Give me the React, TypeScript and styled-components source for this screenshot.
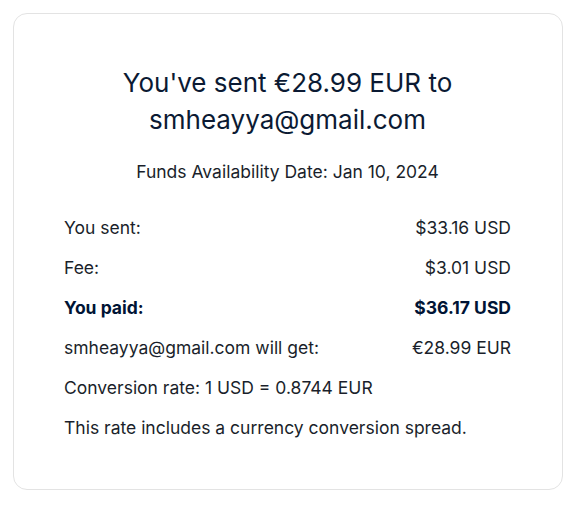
import React from "react";
import styled, { createGlobalStyle } from "styled-components";

const GlobalStyle = createGlobalStyle`
  body {
    margin: 0;
    background: #ffffff;
    font-family: Inter, "Noto Sans", Arial, sans-serif;
    color: #001435;
  }
`;

const Page = styled.div`
  padding: 13px 20px 16px 13px;
`;

const Card = styled.section`
  width: 550px;
  height: 477px;
  box-sizing: border-box;
  border: 1px solid #e3e3e3;
  border-radius: 14px;
  padding: 50px 51px 0 50px;
  display: flex;
  flex-direction: column;
`;

const Title = styled.h1`
  margin: 0;
  text-align: center;
  font-size: 26px;
  font-weight: 400;
  line-height: 37px;
  color: #0b1a33;
`;

const Availability = styled.p`
  margin: 22px 0 0;
  text-align: center;
  font-size: 17.5px;
  line-height: 24px;
  color: #1a1f2b;
`;

const Details = styled.div`
  margin-top: 32px;
  display: flex;
  flex-direction: column;
  gap: 16px;
`;

const Row = styled.div<{ $bold?: boolean }>`
  display: flex;
  justify-content: space-between;
  font-size: 17.5px;
  line-height: 24px;
  font-weight: ${(p) => (p.$bold ? 700 : 400)};
  color: ${(p) => (p.$bold ? "#001435" : "#1a1f2b")};
`;

const Note = styled.p`
  margin: 0;
  font-size: 17.5px;
  line-height: 24px;
  color: #1a1f2b;
`;

const rows = [
  { label: "You sent:", value: "$33.16 USD" },
  { label: "Fee:", value: "$3.01 USD" },
  { label: "You paid:", value: "$36.17 USD", bold: true },
  { label: "smheayya@gmail.com will get:", value: "€28.99 EUR" },
];

export default function App() {
  return (
    <Page>
      <GlobalStyle />
      <Card>
        <Title>
          You've sent €28.99 EUR to
          <br />
          smheayya@gmail.com
        </Title>
        <Availability>Funds Availability Date: Jan 10, 2024</Availability>
        <Details>
          {rows.map((r) => (
            <Row key={r.label} $bold={r.bold}>
              <span>{r.label}</span>
              <span>{r.value}</span>
            </Row>
          ))}
          <Note>Conversion rate: 1 USD = 0.8744 EUR</Note>
          <Note>This rate includes a currency conversion spread.</Note>
        </Details>
      </Card>
    </Page>
  );
}
